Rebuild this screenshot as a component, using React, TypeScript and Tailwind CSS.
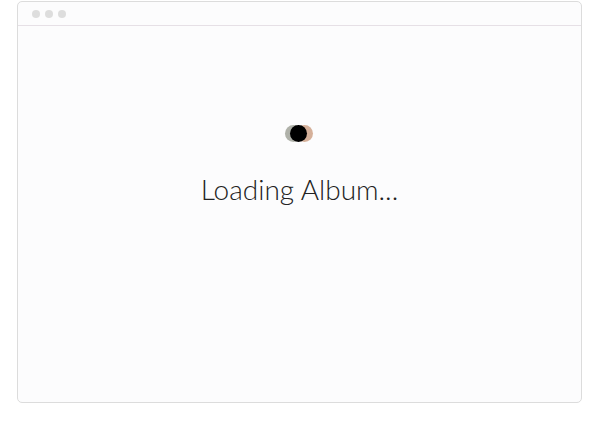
export default function App() {
  return (
    <div className="w-[600px] h-[435px] bg-white pt-px">
      <div className="ml-[17px] w-[565px] h-[402px] rounded-[5px] border border-[#dcdcdc] bg-[#fcfcfd] flex flex-col overflow-hidden">
        <div className="h-[24px] shrink-0 border-b border-[#e6e0e6] flex items-center gap-[5px] pl-[14px]">
          <span className="w-[8px] h-[8px] rounded-full bg-[#dddddd]" />
          <span className="w-[8px] h-[8px] rounded-full bg-[#dddddd]" />
          <span className="w-[8px] h-[8px] rounded-full bg-[#dddddd]" />
        </div>
        <div className="flex flex-col items-center pt-[99px]">
          <div className="relative w-[28px] h-[17px] translate-x-[-1px]">
            <span className="absolute left-0 top-0 w-[17px] h-[17px] rounded-full bg-[#8f9184] opacity-70" />
            <span className="absolute left-[11px] top-0 w-[17px] h-[17px] rounded-full bg-[#c4906f] opacity-70" />
            <span className="absolute left-[5px] top-0 w-[17px] h-[17px] rounded-full bg-black" />
          </div>
          <div className="mt-[30px] text-[28px] leading-[34px] font-light text-[#222] font-['Lato','Liberation_Sans',sans-serif]">
            Loading Album...
          </div>
        </div>
      </div>
    </div>
  );
}
